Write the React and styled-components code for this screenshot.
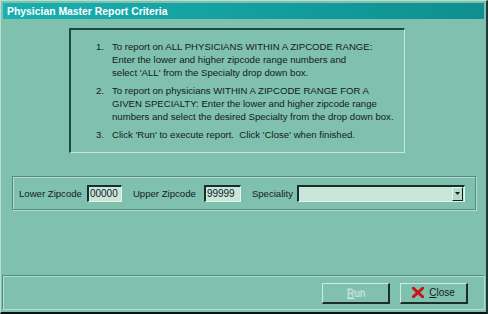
import { createGlobalStyle, styled } from "styled-components";

const GlobalStyle = createGlobalStyle`
  html, body {
    margin: 0;
    padding: 0;
    background: #80c0ae;
  }
  * {
    box-sizing: border-box;
  }
`;

const Window = styled.div`
  width: 488px;
  height: 314px;
  display: flex;
  flex-direction: column;
  background: #80c0ae;
  border-top: 1px solid #b8ded2;
  border-left: 1px solid #b8ded2;
  border-right: 2px solid #1f3a34;
  border-bottom: 2px solid #0a1412;
  font-family: "Liberation Sans", Arial, sans-serif;
  font-size: 9.6px;
  color: #10201c;
`;

const TitleBar = styled.div`
  margin: 2px 2px 0 2px;
  height: 16px;
  display: flex;
  align-items: center;
  padding-left: 4px;
  background: linear-gradient(to right, #18b0b0, #0f8f8f);
  color: #ffffff;
  font-family: "Liberation Sans", Arial, sans-serif;
  font-weight: bold;
  font-size: 10.4px;
`;

const InstructionBox = styled.div`
  margin: 9px 0 0 68px;
  width: 336px;
  height: 125px;
  border-top: 2px solid #1d4a40;
  border-left: 2px solid #1d4a40;
  border-right: 1px solid #c6e6da;
  border-bottom: 1px solid #c6e6da;
  padding: 10px 0 0 25px;
`;

const Step = styled.div`
  display: flex;
  line-height: 13px;
  font-size: 9.6px;
  margin-bottom: 5px;
`;

const StepNum = styled.span`
  width: 16px;
  flex: none;
`;

const Line = styled.div`
  white-space: pre;
`;

const GroupBox = styled.div`
  margin: 23px 0 0 11px;
  width: 464px;
  height: 34px;
  border: 1px solid #4f8d7f;
  box-shadow: inset 1px 1px 0 #b6dccf, 1px 1px 0 #b6dccf;
  display: flex;
  align-items: center;
  padding-left: 6px;
`;

const Label = styled.span`
  flex: none;
  white-space: nowrap;
  font-size: 9.6px;
  margin-right: ${(p) => p.$gap}px;
`;

const Sunken = styled.div`
  flex: none;
  height: 17px;
  width: ${(p) => p.$w}px;
  margin-right: ${(p) => p.$mr || 0}px;
  background: #c9e6d9;
  border-top: 2px solid #14302a;
  border-left: 2px solid #14302a;
  border-right: 1px solid #e4f4ec;
  border-bottom: 1px solid #e4f4ec;
  font-size: 10px;
  line-height: 13px;
  padding-left: 1px;
  display: flex;
  align-items: center;
`;

const Value = styled.span`
  flex: 1;
`;

const DropButton = styled.div`
  width: 11px;
  height: 14px;
  margin-right: 1px;
  background: #b4dccc;
  border-top: 1px solid #eaf6f0;
  border-left: 1px solid #eaf6f0;
  border-right: 1px solid #10201c;
  border-bottom: 1px solid #10201c;
  display: flex;
  align-items: center;
  justify-content: center;
`;

const Spacer = styled.div`
  flex: 1;
`;

const BottomPanel = styled.div`
  margin: 0 1px 2px 1px;
  height: 35px;
  border-top: 1px solid #4f8d7f;
  border-left: 1px solid #4f8d7f;
  border-bottom: 1px solid #b6dccf;
  border-right: 1px solid #b6dccf;
  box-shadow: inset 1px 1px 0 #b6dccf;
  display: flex;
  align-items: center;
  justify-content: flex-end;
  padding-right: 16px;
  gap: 10px;
`;

const Button = styled.div`
  width: 68px;
  height: 21px;
  margin-top: 1px;
  display: flex;
  align-items: center;
  justify-content: center;
  gap: 5px;
  background: #80c0ae;
  border-top: 1px solid #d0ece2;
  border-left: 1px solid #d0ece2;
  border-right: 2px solid #1a2e2a;
  border-bottom: 2px solid #1a2e2a;
  font-size: 10px;
  color: ${(p) => (p.$disabled ? "#a8d4c6" : "#10201c")};
  text-shadow: ${(p) => (p.$disabled ? "1px 1px 0 #d4ece3" : "none")};
`;

const steps = [
  [
    "To report on ALL PHYSICIANS WITHIN A ZIPCODE RANGE:",
    "Enter the lower and higher zipcode range numbers and",
    "select 'ALL' from the Specialty drop down box.",
  ],
  [
    "To report on physicians WITHIN A ZIPCODE RANGE FOR A",
    "GIVEN SPECIALTY: Enter the lower and higher zipcode range",
    "numbers and select the desired Specialty from the drop down box.",
  ],
  ["Click 'Run' to execute report.  Click 'Close' when finished."],
];

export default function App() {
  return (
    <>
      <GlobalStyle />
      <Window>
        <TitleBar>Physician Master Report Criteria</TitleBar>
        <InstructionBox>
          {steps.map((lines, i) => (
            <Step key={i}>
              <StepNum>{i + 1}.</StepNum>
              <div>
                {lines.map((line, j) => (
                  <Line key={j}>{line}</Line>
                ))}
              </div>
            </Step>
          ))}
        </InstructionBox>
        <GroupBox>
          <Label $gap={5}>Lower Zipcode</Label>
          <Sunken $w={35} $mr={11}>
            <Value>00000</Value>
          </Sunken>
          <Label $gap={8}>Upper Zipcode</Label>
          <Sunken $w={37} $mr={11}>
            <Value>99999</Value>
          </Sunken>
          <Label $gap={4}>Speciality</Label>
          <Sunken $w={168}>
            <Value />
            <DropButton>
              <svg width="5" height="3" viewBox="0 0 5 3">
                <path d="M0 0h5L2.5 3z" fill="#10201c" />
              </svg>
            </DropButton>
          </Sunken>
        </GroupBox>
        <Spacer />
        <BottomPanel>
          <Button $disabled>
            <span>
              <u>R</u>un
            </span>
          </Button>
          <Button>
            <svg width="12" height="11" viewBox="0 0 12 11">
              <path
                d="M1 1 L11 10 M11 1 L1 10"
                stroke="#c81414"
                strokeWidth="3"
                strokeLinecap="round"
              />
            </svg>
            <span>
              <u>C</u>lose
            </span>
          </Button>
        </BottomPanel>
      </Window>
    </>
  );
}
